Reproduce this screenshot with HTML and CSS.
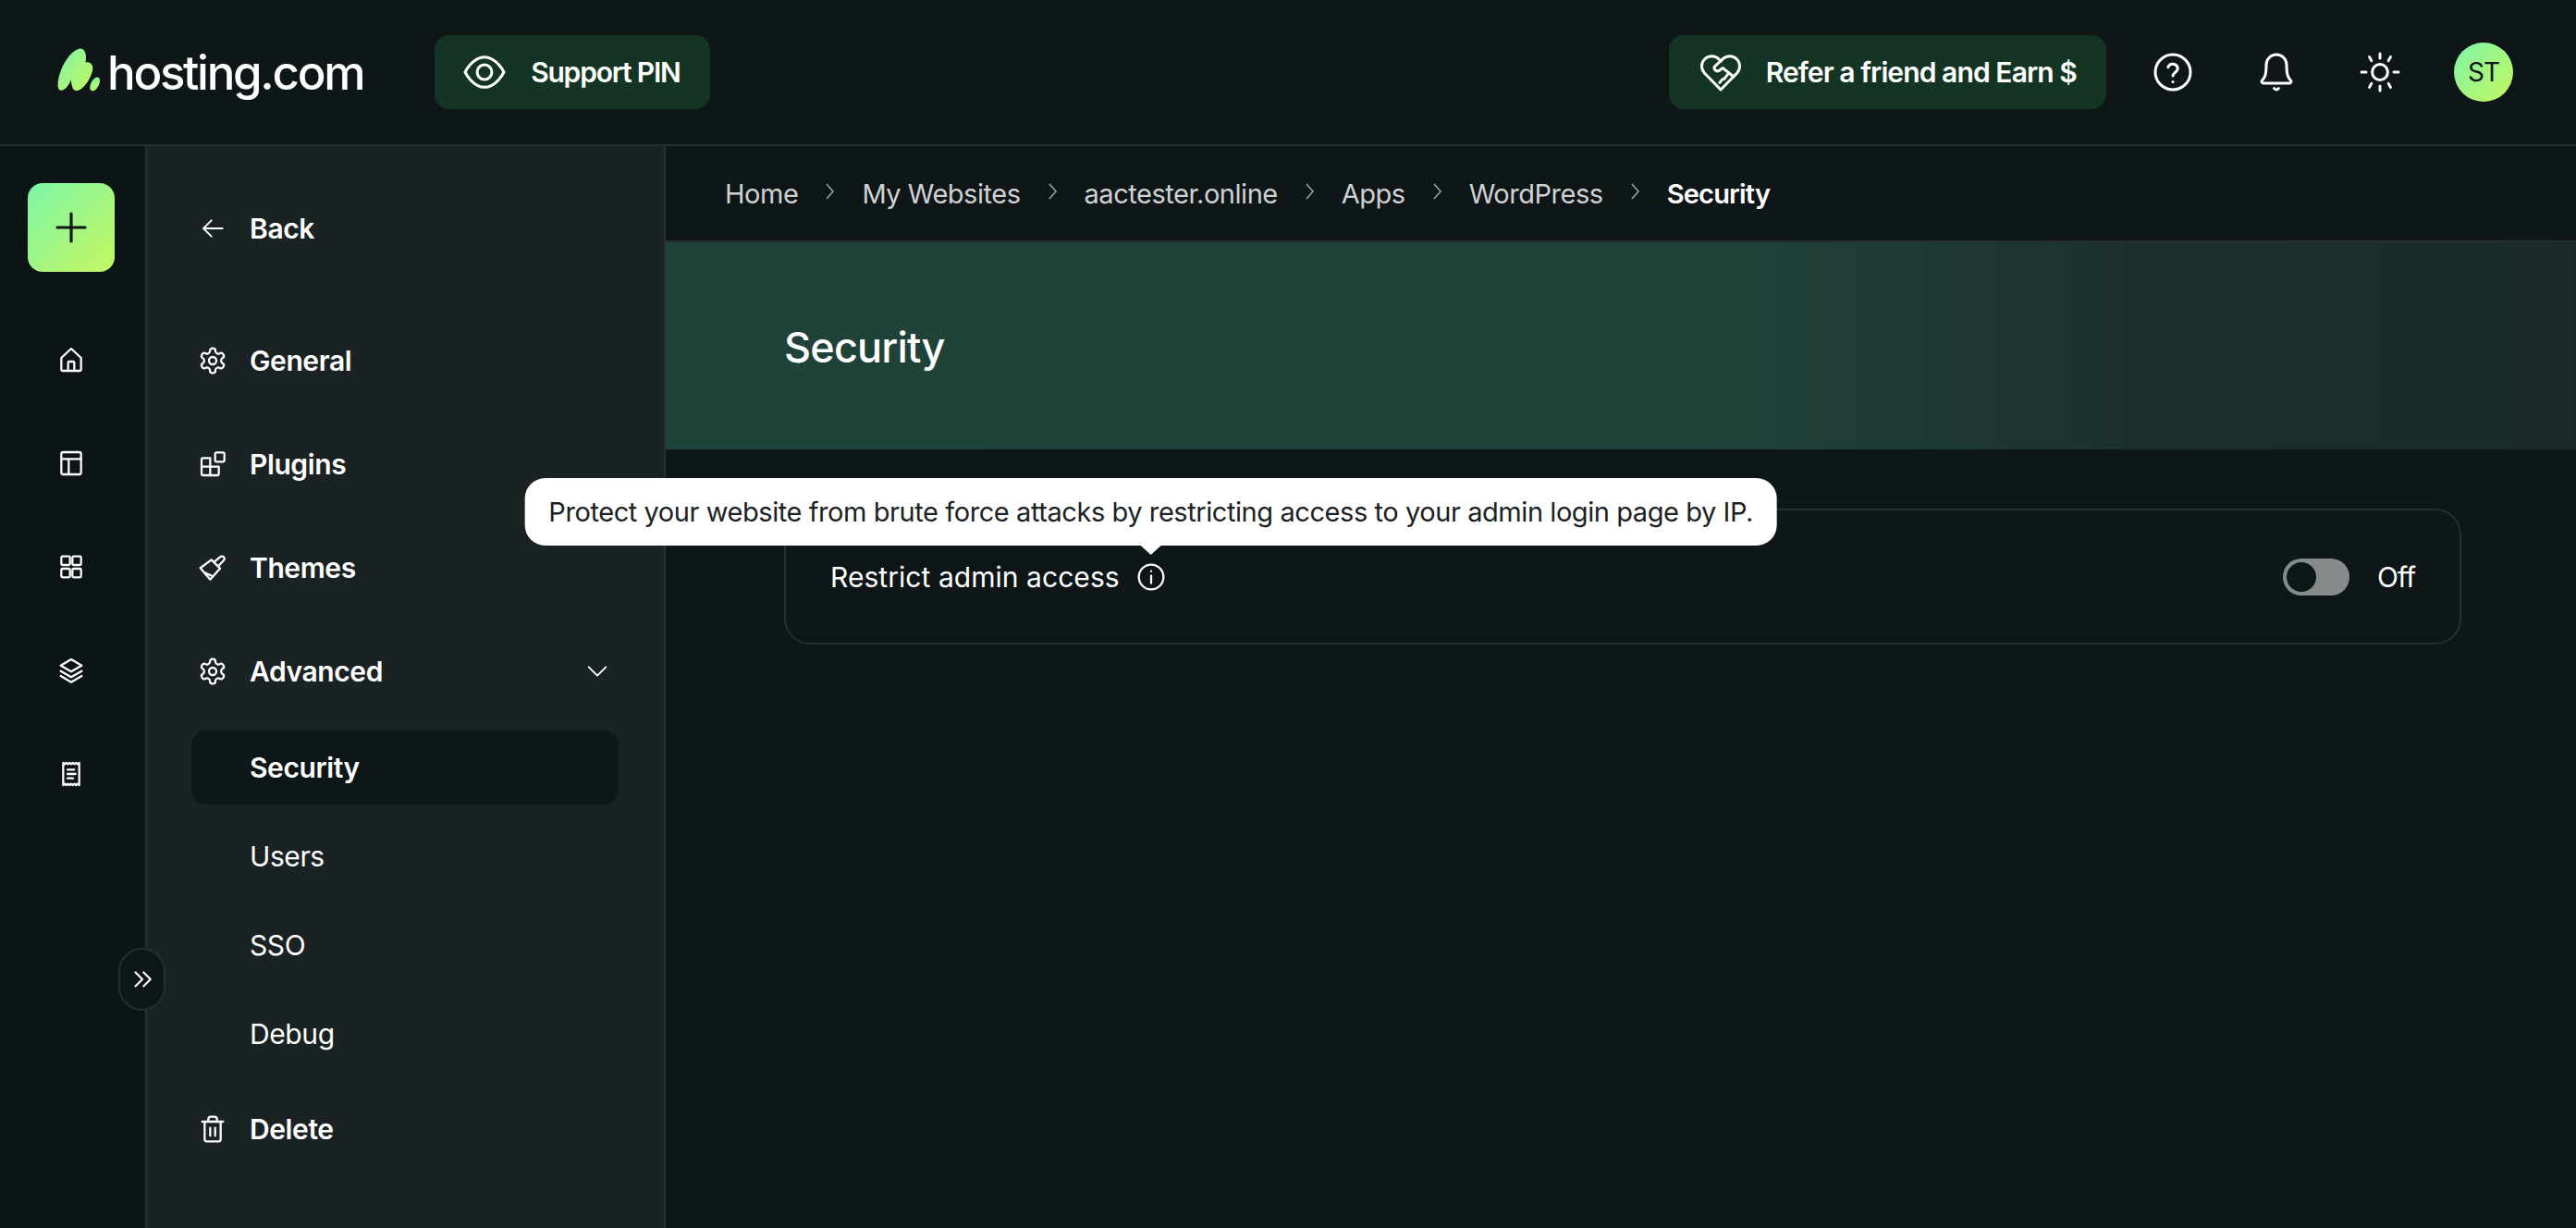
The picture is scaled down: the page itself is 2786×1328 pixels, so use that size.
FILE: index.html
```html
<!DOCTYPE html>
<html lang="en">
<head>
    <meta charset="UTF-8">
    <title>Security - hosting.com</title>
    <link rel="stylesheet" href="styles.css">
</head>
<body>
    <svg class="defs" width="0" height="0">
        <defs>
            <linearGradient id="brand" x1="0" y1="0" x2="1" y2="1">
                <stop offset="0" stop-color="#7df5a8"/>
                <stop offset="1" stop-color="#c6f75f"/>
            </linearGradient>
            <symbol id="gear" viewBox="0 0 24 24">
                <path d="M12.22 2h-.44a2 2 0 0 0-2 2v.18a2 2 0 0 1-1 1.73l-.43.25a2 2 0 0 1-2 0l-.15-.08a2 2 0 0 0-2.73.73l-.22.38a2 2 0 0 0 .73 2.73l.15.1a2 2 0 0 1 1 1.72v.51a2 2 0 0 1-1 1.74l-.15.09a2 2 0 0 0-.73 2.73l.22.38a2 2 0 0 0 2.73.73l.15-.08a2 2 0 0 1 2 0l.43.25a2 2 0 0 1 1 1.73V20a2 2 0 0 0 2 2h.44a2 2 0 0 0 2-2v-.18a2 2 0 0 1 1-1.73l.43-.25a2 2 0 0 1 2 0l.15.08a2 2 0 0 0 2.73-.73l.22-.39a2 2 0 0 0-.73-2.73l-.15-.08a2 2 0 0 1-1-1.74v-.5a2 2 0 0 1 1-1.74l.15-.09a2 2 0 0 0 .73-2.73l-.22-.38a2 2 0 0 0-2.73-.73l-.15.08a2 2 0 0 1-2 0l-.43-.25a2 2 0 0 1-1-1.73V4a2 2 0 0 0-2-2z"/>
                <circle cx="12" cy="12" r="3"/>
            </symbol>
            <symbol id="crumb" viewBox="0 0 13 20">
                <path d="M3 2l7 8-7 8"/>
            </symbol>
        </defs>
    </svg>

    <header class="topbar">
        <a class="logo">
            <svg class="logo-mark" viewBox="36 26 140 140">
                <path fill="url(#brand)" d="M38 140C40 100 70 40 105 28C122 24 132 40 127 72C140 68 152 78 150 95C144 125 120 160 100 163C86 165 82 150 80 128C74 145 62 162 48 162C40 162 37 152 38 140Z"/>
                <ellipse fill="url(#brand)" cx="157" cy="142" rx="13" ry="24" transform="rotate(28 157 142)"/>
            </svg>
            <span class="logo-text">hosting.com</span>
        </a>
        <button class="pill-btn support">
            <svg class="icon icon-eye" viewBox="0 0 24 24"><path d="M3 12s3.500-7 9-7 9 7 9 7-3.500 7-9 7-9-7-9-7Z"/><circle cx="12" cy="12" r="3.400"/></svg>
            Support PIN
        </button>
        <div class="topbar-right">
            <button class="pill-btn refer">
                <svg class="icon icon-heart" viewBox="0 0 24 24"><path d="M12 21.500 3.300 12.600a5.400 5.400 0 0 1 0-7.600 5.400 5.400 0 0 1 7.700 0l1 1 1-1a5.400 5.400 0 0 1 7.700 0 5.400 5.400 0 0 1 0 7.600Z"/><path d="M12.500 5.500 9 8.700c-1.300 1.300.4 3.400 2 2.500l2.200-1.400 5.800 4.700M15.700 13.300l-1.900 2.500M13 15.800l-1.600 1.900"/></svg>
                Refer a friend and Earn $
            </button>
            <a class="icon-btn"><svg class="icon icon-top" viewBox="0 0 24 24"><circle cx="12" cy="12" r="9.500"/><path d="M9.400 9.300a2.700 2.700 0 0 1 5.200.8c0 1.800-2.600 2.300-2.600 3.900"/><path d="M12 17.200v.1"/></svg></a>
            <a class="icon-btn"><svg class="icon icon-top" viewBox="0 0 24 24"><path d="M6.500 8a5.500 5.500 0 0 1 11 0c0 6 1 7 2 8.200a1 1 0 0 1-.8 1.800H5.300a1 1 0 0 1-.8-1.800c1-1.200 2-2.200 2-8.200Z"/><path d="M10.800 20.800a1.400 1.400 0 0 0 2.400 0"/></svg></a>
            <a class="icon-btn"><svg class="icon icon-top" viewBox="0 0 24 24"><circle cx="12" cy="12" r="4.200"/><path d="M12 2v2.500M12 19.500V22M2 12h2.500M19.500 12H22M6.300 3.800l1.100 2M16.600 18.200l1.100 2M17.700 3.800l-1.100 2M7.400 18.200l-1.100 2"/></svg></a>
            <div class="avatar">ST</div>
        </div>
    </header>

    <div class="layout">
        <nav class="rail">
            <button class="add-btn">
                <svg class="icon icon-plus" viewBox="0 0 24 24"><path d="M12 3v18M3 12h18"/></svg>
            </button>
            <a class="rail-item"><svg class="icon" viewBox="0 0 24 24"><path d="M4 10.500 12 3l8 7.500V20a1 1 0 0 1-1 1H5a1 1 0 0 1-1-1Z"/><path d="M9.500 21v-6.500a1 1 0 0 1 1-1h3a1 1 0 0 1 1 1V21"/></svg></a>
            <a class="rail-item"><svg class="icon" viewBox="0 0 24 24"><rect x="4" y="3" width="16" height="18" rx="1.500"/><path d="M4 8.500h16M10 8.500V21"/></svg></a>
            <a class="rail-item"><svg class="icon" viewBox="0 0 24 24"><rect x="4" y="3.500" width="7" height="7" rx="1"/><rect x="13" y="3.500" width="7" height="7" rx="1"/><rect x="4" y="13.500" width="7" height="7" rx="1"/><rect x="13" y="13.500" width="7" height="7" rx="1"/></svg></a>
            <a class="rail-item"><svg class="icon" viewBox="0 0 24 24"><path d="M12 3l8.500 5L12 13 3.500 8Z"/><path d="M3.500 12.500 12 17.500l8.500-5M3.500 16.500 12 21.500l8.500-5"/></svg></a>
            <a class="rail-item"><svg class="icon" viewBox="0 0 24 24"><path d="M5.500 3l1.300 1 1.300-1 1.300 1 1.300-1 1.300 1 1.300-1 1.300 1 1.300-1 1.300 1 1.300-1v18l-1.300-1-1.300 1-1.300-1-1.300 1-1.300-1-1.300 1-1.300-1-1.300 1-1.300-1-1.300 1Z"/><path d="M9 8.500h5.500M9 12h6.500M9 15.500h4.500"/></svg></a>
        </nav>
        <button class="collapse-btn">
            <svg class="icon icon-small" viewBox="0 0 24 24"><path d="M6 6l6 6-6 6M13 6l6 6-6 6"/></svg>
        </button>

        <aside class="panel">
            <a class="nav-item back"><svg class="icon icon-thin" viewBox="0 0 24 24"><path d="M20 12H5M11 5.500 4.500 12l6.500 6.500"/></svg>Back</a>
            <a class="nav-item"><svg class="icon"><use href="#gear"/></svg>General</a>
            <a class="nav-item"><svg class="icon" viewBox="0 0 24 24"><path d="M4 7h6v7h7v6a1 1 0 0 1-1 1H4a1 1 0 0 1-1-1V8a1 1 0 0 1 1-1Z"/><path d="M3 14h7M10 14v7"/><rect x="14" y="2.500" width="7.500" height="7.500" rx="1"/></svg>Plugins</a>
            <a class="nav-item"><svg class="icon" viewBox="0 0 24 24"><path d="M2 12.200 11 5.500l7 7-8 9Z"/><path d="M13.500 7 18 3.300a2 2 0 0 1 3 2.700l-4.300 4.500"/><path d="M6 16.200l6.200 2.800"/></svg>Themes</a>
            <a class="nav-item open"><svg class="icon"><use href="#gear"/></svg>Advanced
                <svg class="icon icon-thin chevron" viewBox="0 0 24 24"><path d="M5 8.500l7 7 7-7"/></svg>
            </a>
            <div class="subnav">
                <a class="sub-item active">Security</a>
                <a class="sub-item">Users</a>
                <a class="sub-item">SSO</a>
                <a class="sub-item">Debug</a>
            </div>
            <a class="nav-item"><svg class="icon" viewBox="0 0 24 24"><path d="M3.500 6h17M8.500 6V4a2 2 0 0 1 2-2h3a2 2 0 0 1 2 2v2M5.500 6v14.500a1.500 1.500 0 0 0 1.500 1.500h10a1.500 1.500 0 0 0 1.500-1.500V6M10 11v6.500M14 11v6.500"/></svg>Delete</a>
        </aside>

        <main class="main">
            <div class="breadcrumbs">
                <a>Home</a><svg class="crumb-sep"><use href="#crumb"/></svg>
                <a>My Websites</a><svg class="crumb-sep"><use href="#crumb"/></svg>
                <a>aactester.online</a><svg class="crumb-sep"><use href="#crumb"/></svg>
                <a>Apps</a><svg class="crumb-sep"><use href="#crumb"/></svg>
                <a>WordPress</a><svg class="crumb-sep"><use href="#crumb"/></svg>
                <a class="current">Security</a>
            </div>
            <div class="hero">
                <h1>Security</h1>
            </div>
            <div class="content">
                <div class="card">
                    <div class="card-label">
                        Restrict admin access
                        <span class="info">
                            <svg class="icon icon-info" viewBox="0 0 24 24"><circle cx="12" cy="12" r="10"/><path d="M12 11v6"/><path d="M12 7.200v.1"/></svg>
                            <span class="tooltip">Protect your website from brute force attacks by restricting access to your admin login page by IP.</span>
                        </span>
                    </div>
                    <div class="card-toggle">
                        <span class="toggle"><span class="knob"></span></span>
                        Off
                    </div>
                </div>
            </div>
        </main>
    </div>
</body>
</html>
```

FILE: styles.css
```css
body {
    margin: 0;
    height: 100vh;
    overflow: hidden;
    display: flex;
    flex-direction: column;
    font-family: Inter, "Liberation Sans", sans-serif;
    font-size: 30px;
    color: #fff;
    background-color: #0e1617;
    letter-spacing: -0.4px;
}
a {
    color: inherit;
}
button {
    font: inherit;
    letter-spacing: inherit;
    color: inherit;
    border: none;
}
.defs {
    position: absolute;
}
.icon {
    width: 32px;
    height: 32px;
    flex: none;
    fill: none;
    stroke: #fff;
    stroke-width: 1.7;
    stroke-linecap: round;
    stroke-linejoin: round;
}

/* top bar */
.topbar {
    height: 156px;
    flex: none;
    display: flex;
    align-items: center;
    padding: 0 68px 0 62px;
    border-bottom: 2px solid #262e30;
}
.logo {
    display: flex;
    align-items: center;
    gap: 7px;
    margin-right: 77px;
}
.logo-mark {
    width: 47px;
    height: 47px;
    margin-top: -6px;
}
.logo-text {
    font-size: 51px;
    font-weight: 500;
    letter-spacing: -2.3px;
}
.pill-btn {
    height: 80px;
    display: flex;
    align-items: center;
    background-color: #153524;
    border-radius: 16px;
    font-weight: 600;
    letter-spacing: -0.9px;
    white-space: nowrap;
}
.support {
    padding: 0 32px 0 26px;
    gap: 22px;
    letter-spacing: -1.2px;
}
.icon-eye {
    width: 56px;
    height: 56px;
    stroke-width: 1.3;
}
.refer {
    padding: 0 32px;
    gap: 25px;
    margin-right: -12px;
}
.icon-heart {
    width: 48px;
    height: 48px;
    stroke-width: 1.5;
}
.topbar-right {
    margin-left: auto;
    display: flex;
    align-items: center;
    gap: 56px;
}
.icon-btn {
    width: 56px;
    display: flex;
    justify-content: center;
}
.icon-top {
    width: 48px;
    height: 48px;
    stroke-width: 1.5;
}
.avatar {
    width: 64px;
    height: 64px;
    margin-left: -4px;
    display: flex;
    align-items: center;
    justify-content: center;
    border-radius: 50%;
    background: linear-gradient(135deg, #7df5a8, #c6f75f);
    color: #0e1617;
    font-size: 28px;
    letter-spacing: -1px;
}

/* page frame */
.layout {
    flex: 1;
    display: grid;
    grid-template-columns: 159px 561px 1fr;
    position: relative;
}
.rail {
    display: flex;
    flex-direction: column;
    align-items: center;
    padding: 40px 3px 0 0;
    gap: 80px;
    background-color: #0c1415;
    border-right: 2px solid #262e30;
}
.add-btn {
    width: 94px;
    height: 96px;
    margin-bottom: -1px;
    display: flex;
    align-items: center;
    justify-content: center;
    border-radius: 16px;
    background: linear-gradient(135deg, #7df5a8, #c6f75f);
}
.icon-plus {
    width: 40px;
    height: 40px;
    stroke: #0e1617;
    stroke-width: 1.9;
}
.rail-item {
    display: flex;
    height: 32px;
}
.collapse-btn {
    position: absolute;
    left: 128px;
    top: 867px;
    width: 51px;
    height: 68px;
    padding: 0;
    display: flex;
    align-items: center;
    justify-content: center;
    border: 2px solid #262e30;
    border-radius: 26px;
    background-color: #0e1617;
}
.icon-small {
    width: 30px;
    height: 30px;
}

/* side panel */
.panel {
    padding: 57px 49px 0 48px;
    background-color: #1a2224;
    border-right: 2px solid #262e30;
}
.nav-item {
    height: 64px;
    margin-bottom: 48px;
    padding: 0 7px;
    display: flex;
    align-items: center;
    gap: 24px;
    font-weight: 600;
}
.back {
    margin-bottom: 79px;
}
.chevron {
    margin-left: auto;
}
.icon-thin {
    stroke-width: 1.4;
}
.subnav {
    display: flex;
    flex-direction: column;
    gap: 16px;
    margin: -16px 0 31px;
}
.sub-item {
    height: 80px;
    padding-left: 63px;
    display: flex;
    align-items: center;
    border-radius: 16px;
}
.sub-item.active {
    background-color: #0e1617;
    font-weight: 600;
}

/* main area */
.breadcrumbs {
    height: 102px;
    padding-left: 64px;
    display: flex;
    align-items: center;
    gap: 28px;
    font-size: 29px;
    letter-spacing: -0.47px;
    color: #d0d2d2;
    border-bottom: 2px solid #262e30;
}
.crumb-sep {
    width: 13px;
    height: 20px;
    margin-top: -4px;
    fill: none;
    stroke: #a0a4a4;
    stroke-width: 1.5;
}
.current {
    color: #fff;
    font-weight: 600;
    letter-spacing: -0.8px;
}
.hero {
    height: 224px;
    padding-left: 128px;
    display: flex;
    align-items: center;
    background: linear-gradient(90deg, #1f4239 0, #1f4138 57%, #1b2f2d 78%, #1a2a2a 100%);
}
h1 {
    margin: 2px 0 0;
    font-size: 45px;
    font-weight: 500;
    letter-spacing: -0.8px;
}
.content {
    padding: 64px 124px 0 128px;
}
.card {
    height: 147px;
    box-sizing: border-box;
    padding: 0 48px;
    display: flex;
    align-items: center;
    justify-content: space-between;
    border: 2px solid #262e30;
    border-radius: 28px;
    letter-spacing: 0.05px;
}
.card-label {
    display: flex;
    align-items: center;
    gap: 18px;
}
.info {
    position: relative;
    display: flex;
}
.icon-info {
    width: 32px;
    height: 32px;
}
.tooltip {
    position: absolute;
    left: 50%;
    bottom: calc(100% + 18px);
    transform: translateX(-50%);
    z-index: 5;
    padding: 0 26px;
    height: 73px;
    display: flex;
    align-items: center;
    background-color: #fff;
    color: #1a2224;
    border-radius: 22px;
    font-size: 29px;
    letter-spacing: -0.43px;
    white-space: nowrap;
}
.tooltip::after {
    content: "";
    position: absolute;
    left: 50%;
    top: 100%;
    margin-left: -11px;
    border: 11px solid transparent;
    border-bottom: none;
    border-top: 10px solid #fff;
}
.card-toggle {
    display: flex;
    align-items: center;
    gap: 30px;
    letter-spacing: -1px;
}
.toggle {
    width: 72px;
    height: 40px;
    padding: 4px;
    box-sizing: border-box;
    border-radius: 20px;
    background-color: #858b8a;
}
.knob {
    display: block;
    width: 32px;
    height: 32px;
    border-radius: 50%;
    background-color: #0e1617;
}
```
